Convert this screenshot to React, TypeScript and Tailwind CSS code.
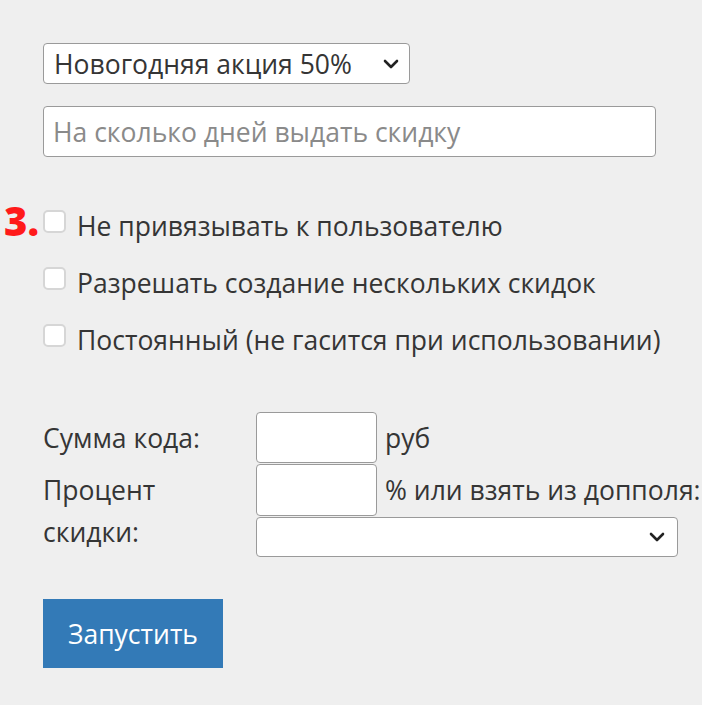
import React from 'react';

const Chevron = () => (
  <svg width="16" height="10" viewBox="0 0 16 10" className="pointer-events-none">
    <path d="M2 2l6 6 6-6" fill="none" stroke="#222" strokeWidth="2.6" strokeLinecap="round" strokeLinejoin="round" />
  </svg>
);

const CheckRow = ({ label }: { label: string }) => (
  <label className="flex items-center h-[57px] gap-[11px]">
    <span className="w-[23px] h-[23px] -mt-[8px] rounded-[5px] border-2 border-[#d6d6d6] bg-white shrink-0" />
    <span>{label}</span>
  </label>
);

export default function App() {
  return (
    <div
      className="min-h-[705px] w-[702px] bg-[#efefef] text-[#353535] text-[26.5px] leading-[32px] relative overflow-hidden"
      style={{ fontFamily: '"Open Sans", "Liberation Sans", sans-serif' }}
    >
      <div className="pl-[43px] pt-[43px]">
        <div className="flex items-center justify-between w-[367px] h-[41px] bg-white border border-[#9a9a9a] rounded-[4px] pl-[10px] pr-[10px]">
          <span className="whitespace-nowrap">Новогодняя акция 50%</span>
          <Chevron />
        </div>

        <div className="mt-[22px] flex items-center w-[613px] h-[51px] bg-white border border-[#9a9a9a] rounded-[4px] pl-[9px] text-[#8a8a8a] whitespace-nowrap">
          На сколько дней выдать скидку
        </div>

        <div className="mt-[40px] relative">
          <span className="absolute -left-[39px] top-[4px] text-[40px] leading-[40px] font-extrabold text-[#ff1a1a]">3.</span>
          <CheckRow label="Не привязывать к пользователю" />
          <CheckRow label="Разрешать создание нескольких скидок" />
          <CheckRow label="Постоянный (не гасится при использовании)" />
        </div>

        <div className="mt-[44px] grid grid-cols-[213px_1fr] gap-y-[1px]">
          <div className="flex items-center h-[51px]">Сумма кода:</div>
          <div className="flex items-center">
            <div className="w-[121px] h-[51px] bg-white border border-[#9a9a9a] rounded-[4px]" />
            <span className="ml-[8px]">руб</span>
          </div>

          <div className="row-span-2 pt-[5px] leading-[42px] w-[150px]">Процент скидки:</div>
          <div className="flex items-center">
            <div className="w-[121px] h-[52px] bg-white border border-[#9a9a9a] rounded-[4px] shrink-0" />
            <span className="ml-[8px] whitespace-nowrap">% или взять из допполя:</span>
          </div>
          <div className="flex items-center justify-end w-[422px] h-[40px] bg-white border border-[#9a9a9a] rounded-[4px] pr-[12px]">
            <Chevron />
          </div>
        </div>

        <button className="mt-[42px] w-[180px] h-[69px] bg-[#337ab7] text-white">Запустить</button>
      </div>
    </div>
  );
}
